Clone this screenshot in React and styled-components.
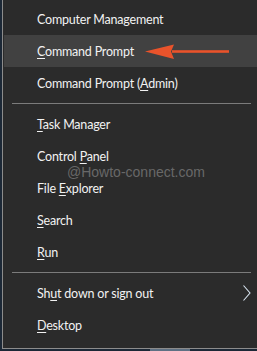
import React from 'react';
import styled, { createGlobalStyle } from 'styled-components';

const GlobalStyle = createGlobalStyle`
  html, body {
    margin: 0;
    padding: 0;
    background: #1c2836;
    overflow: hidden;
  }
`;

const Screen = styled.div`
  width: 257px;
  height: 351px;
  display: flex;
  flex-direction: column;
  position: relative;
`;

const Menu = styled.div`
  margin-left: 2px;
  width: 254px;
  height: 348px;
  background: #2b2b2b;
  border-left: 1px solid #8c8c8c;
  border-bottom: 1px solid #8c8c8c;
  padding-top: 3px;
  box-sizing: content-box;
  display: flex;
  flex-direction: column;
  font-family: Lato, "Noto Sans", sans-serif;
  font-size: 12.5px;
  letter-spacing: -0.2px;
  color: #f2f2f2;
`;

const Item = styled.div`
  height: 32px;
  display: flex;
  align-items: center;
  padding-left: 33px;
  padding-right: 7px;
  margin-left: 1px;
  background: ${(p) => (p.$active ? '#414141' : 'transparent')};
  position: relative;

  u {
    text-decoration-thickness: 1px;
    text-underline-offset: 2px;
  }
`;

const Label = styled.span`
  flex: 1;
  white-space: nowrap;
`;

const Separator = styled.div`
  height: 9px;
  display: flex;
  align-items: center;
  padding: 0 6px 0 9px;

  &::after {
    content: '';
    flex: 1;
    height: 1px;
    background: #7b7b7b;
  }
`;

const Taskbar = styled.div`
  height: 2px;
  display: flex;
  padding-left: 150px;
`;

const TaskItem = styled.div`
  width: 40px;
  height: 2px;
  background: #5f7184;
`;

const Watermark = styled.div`
  position: absolute;
  left: 67px;
  top: 164px;
  font-family: "Liberation Sans", Arial, sans-serif;
  font-size: 14px;
  color: #686868;
  white-space: nowrap;
  pointer-events: none;
`;

const Arrow = styled.svg`
  position: absolute;
  left: 144px;
  top: 43px;
`;

const Chevron = styled.svg`
  position: absolute;
  right: 6px;
  top: 50%;
  margin-top: -8px;
`;

const items = [
  { key: 'cm', label: <>Computer Management</> },
  { key: 'cp', label: <><u>C</u>ommand Prompt</>, active: true },
  { key: 'cpa', label: <>Command Prompt (<u>A</u>dmin)</> },
  { sep: true, key: 's1' },
  { key: 'tm', label: <><u>T</u>ask Manager</> },
  { key: 'ctl', label: <>Control <u>P</u>anel</> },
  { key: 'fe', label: <>File <u>E</u>xplorer</> },
  { key: 'se', label: <><u>S</u>earch</> },
  { key: 'run', label: <><u>R</u>un</> },
  { sep: true, key: 's2' },
  { key: 'sd', label: <>Sh<u>u</u>t down or sign out</>, submenu: true },
  { key: 'dt', label: <><u>D</u>esktop</> },
];

export default function App() {
  return (
    <Screen>
      <GlobalStyle />
      <Menu>
        {items.map((it) =>
          it.sep ? (
            <Separator key={it.key} />
          ) : (
            <Item key={it.key} $active={it.active}>
              <Label>{it.label}</Label>
              {it.submenu && (
                <Chevron width="8" height="16" viewBox="0 0 8 16">
                  <polyline points="0.5,0.5 7,8 0.5,15.5" fill="none" stroke="#d8e4f0" strokeWidth="1.1" />
                </Chevron>
              )}
            </Item>
          )
        )}
      </Menu>
      <Taskbar>
        <TaskItem />
      </Taskbar>
      <Watermark>@Howto-connect.com</Watermark>
      <Arrow width="88" height="18" viewBox="0 0 88 18">
        <path d="M1 8.5 L30 1.5 L27 8.5 L30 16 Z" fill="#e9532b" />
        <rect x="28" y="7.2" width="57" height="2.6" fill="#e9532b" />
      </Arrow>
    </Screen>
  );
}
